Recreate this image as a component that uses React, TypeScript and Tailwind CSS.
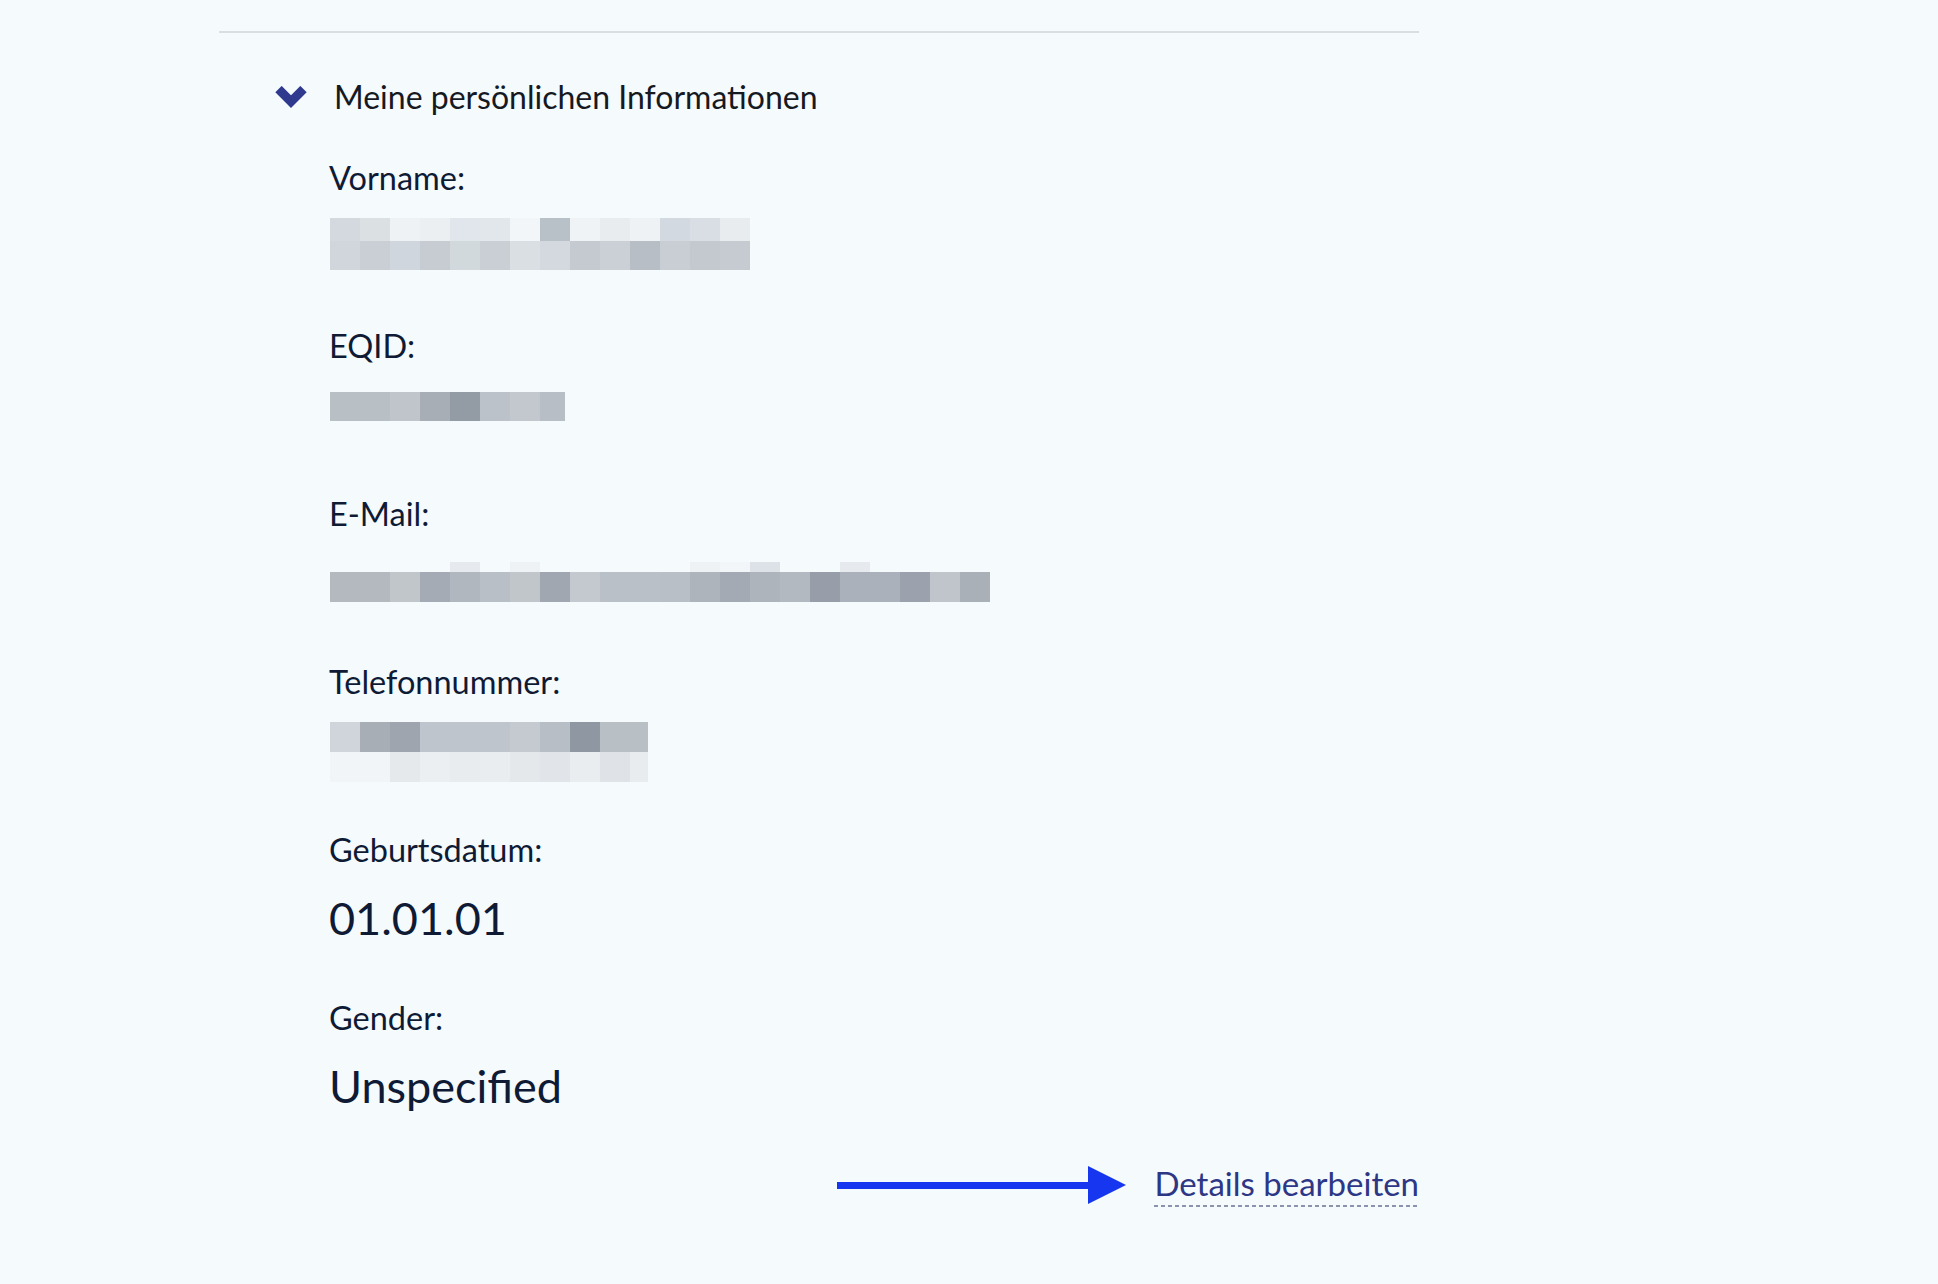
import React from "react";

type Row = { h: number; cells: (string | null)[]; widths?: number[] };

const vorname: Row[] = [
  {
    h: 23,
    cells: ["#d3d9df", "#dbe1e3", "#eef2f5", "#ebeff2", "#e1e6ec", "#e1e7ea", "#f3f6f9", "#b9c1c8", "#eff3f6", "#e8ecef", "#eef2f5", "#d3d9e0", "#d9dde4", "#e8ecef"],
  },
  {
    h: 29,
    cells: ["#d0d6dc", "#c9cfd5", "#d0d6dd", "#c6ccd2", "#d2d9dc", "#c9cfd5", "#dadfe3", "#d3d9df", "#c4cad0", "#cbd0d6", "#b7bec5", "#c8ced4", "#c3c9cf", "#c6cbd1"],
  },
];

const eqid: Row[] = [
  {
    h: 29,
    cells: ["#b8bfc5", "#b8bfc5", "#bfc5cb", "#a7aeb6", "#939ca5", "#bcc2c9", "#c3c8ce", "#b8bec5"],
    widths: [30, 30, 30, 30, 30, 30, 30, 25],
  },
];

const emailTop: (string | null)[] = Array(22).fill(null);
emailTop[4] = "#e6eaee";
emailTop[6] = "#eef2f5";
emailTop[12] = "#eef2f5";
emailTop[13] = "#f3f6f9";
emailTop[14] = "#dde1e8";
emailTop[17] = "#e6eaee";

const email: Row[] = [
  { h: 10, cells: emailTop },
  {
    h: 30,
    cells: ["#b3b9bf", "#b3b9bf", "#c1c6cb", "#a4abb4", "#b0b7bf", "#b8bfc6", "#c1c6cb", "#a0a7b0", "#c4c9cf", "#b9c0c7", "#b9c0c7", "#b8bfc6", "#adb4bc", "#a3aab3", "#adb4bc", "#b3b9c0", "#979ea9", "#abb1ba", "#abb1ba", "#9ca2ad", "#c0c5cc", "#a9b0b7"],
  },
];

const telWidths = [30, 30, 30, 30, 30, 30, 30, 30, 30, 30, 18];
const tel: Row[] = [
  {
    h: 30,
    cells: ["#d0d5db", "#a8aeb6", "#9ea5ae", "#bec5cc", "#bec5cc", "#bec5cc", "#c5cad0", "#b8bec5", "#8f98a2", "#b8bfc5", "#b8bfc5"],
    widths: telWidths,
  },
  {
    h: 30,
    cells: ["#f2f5f7", "#f2f5f7", "#e5e9ec", "#ebeff2", "#e8ecef", "#e9edf0", "#e4e8eb", "#e1e5e9", "#e9edf0", "#dfe3e7", "#e8ecef"],
    widths: telWidths,
  },
];

function Pixels({ rows }: { rows: Row[] }) {
  return (
    <div className="flex flex-col pl-px">
      {rows.map((r, i) => (
        <div key={i} className="flex">
          {r.cells.map((c, j) => (
            <div
              key={j}
              style={{
                width: r.widths ? r.widths[j] : 30,
                height: r.h,
                backgroundColor: c ?? "transparent",
              }}
            />
          ))}
        </div>
      ))}
    </div>
  );
}

function Field({ label, children, gap }: { label: string; children: React.ReactNode; gap: string }) {
  return (
    <div className="h-[168px] flex flex-col">
      <div className="h-[40px] leading-[40px] text-[32.5px] text-[#0f1b35]">{label}</div>
      <div className={gap}>{children}</div>
    </div>
  );
}

export default function App() {
  return (
    <div className="min-h-screen bg-[#f5fafd] font-['Lato',sans-serif]">
      <div className="ml-[219px] w-[1200px] pt-[31px]">
        <div className="h-[2px] bg-[#dadee3]" />

        <div className="mt-[44px] h-[40px] flex items-center pl-[55px] gap-[26px]">
          <svg width="34" height="22" viewBox="0 0 34 22" className="shrink-0">
            <polyline
              points="4.5,3.1 17,15.6 29.5,3.1"
              fill="none"
              stroke="#2f3a8f"
              strokeWidth="9"
              strokeLinejoin="miter"
              strokeLinecap="butt"
            />
          </svg>
          <span className="text-[32px] leading-[40px] text-[#16191f]">Meine persönlichen Informationen</span>
        </div>

        <div className="mt-[41px] pl-[110px] flex flex-col">
          <Field label="Vorname:" gap="mt-[20px]">
            <Pixels rows={vorname} />
          </Field>
          <Field label="EQID:" gap="mt-[26px]">
            <Pixels rows={eqid} />
          </Field>
          <Field label="E-Mail:" gap="mt-[28px]">
            <Pixels rows={email} />
          </Field>
          <Field label="Telefonnummer:" gap="mt-[20px]">
            <Pixels rows={tel} />
          </Field>
          <Field label="Geburtsdatum:" gap="mt-[20px]">
            <div className="text-[45px] leading-[56px] text-[#0f1b35]">01.01.01</div>
          </Field>
          <Field label="Gender:" gap="mt-[20px]">
            <div className="text-[45px] leading-[56px] text-[#0f1b35]">Unspecified</div>
          </Field>
        </div>

        <div className="-mt-[3px] flex justify-end items-center gap-[28px]">
          <svg width="289" height="40" viewBox="0 0 289 40" className="shrink-0">
            <rect x="0" y="17" width="254" height="7" fill="#1636f0" />
            <polygon points="251,1 289,20 251,39" fill="#1636f0" />
          </svg>
          <div className="flex flex-col">
            <span className="text-[33px] leading-[40px] text-[#2d3785]">Details bearbeiten</span>
            <div className="mt-[2px] h-[2px] bg-[linear-gradient(to_right,#8e93ad_4px,transparent_4px)] bg-[length:7px_2px] bg-repeat-x" />
          </div>
        </div>
      </div>
    </div>
  );
}
